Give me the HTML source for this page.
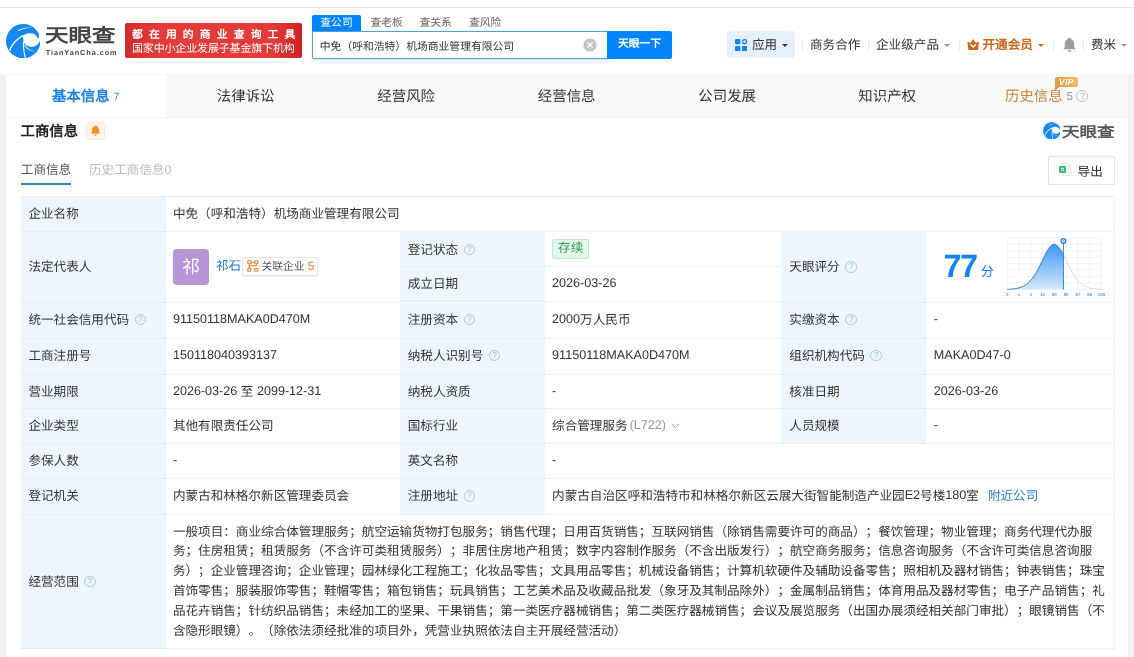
<!DOCTYPE html>
<html lang="zh-CN">
<head>
<meta charset="utf-8">
<title>天眼查</title>
<style>
*{box-sizing:border-box;margin:0;padding:0}
html,body{width:1134px;height:657px;overflow:hidden;background:#fff}
body{position:relative;will-change:transform;text-rendering:geometricPrecision;text-spacing-trim:space-all;font-family:"Liberation Sans",sans-serif;font-size:12.6px;color:#333;line-height:1}
.abs{position:absolute;white-space:nowrap}
.topline{left:0;top:7px;width:1134px;height:1px;background:#e4e4e4}
.strip{background:#f3f3f3;top:74.5px;height:583px;width:6px}
/* header */
.logo-txt{left:44.8px;top:26.1px;font-size:19px;font-weight:bold;color:#444;letter-spacing:0;line-height:22px;transform:scaleX(1.235);transform-origin:0 0}
.logo-sub{left:45.7px;top:49.3px;font-size:7.3px;font-weight:bold;color:#444;letter-spacing:.94px;line-height:8px}
.banner{left:125px;top:22.5px;width:176.5px;height:35.5px;border-radius:2px;background:linear-gradient(90deg,#d22a2a 0%,#e23b3a 18%,#e23b3a 82%,#cc2323 100%);color:#fff;font-weight:bold}
.banner .l1{left:7px;top:6.5px;font-size:10.8px;letter-spacing:6.15px;line-height:12px}
.banner .l2{left:7px;top:20.6px;font-size:11px;letter-spacing:-.16px;line-height:13px;font-weight:normal}
.stab{top:15px;height:16px;line-height:16px;font-size:10.8px;color:#666}
.stab.on{left:312px;width:49px;background:#0084ff;color:#fff;text-align:center;border-radius:2px 2px 0 0;line-height:16.8px}
.sinput{left:312px;top:31px;width:296px;height:27.5px;border:1px solid #4aa3d8;border-right:none;background:#fff;border-radius:0 0 0 2px;box-shadow:0 1px 2px rgba(0,80,140,.18)}
.sinput span{left:6.8px;top:0;line-height:30.4px;font-size:10.8px;color:#333}
.sbtn{left:607px;top:31px;width:65px;height:27.5px;background:#0084ff;color:#fff;font-size:10.8px;font-weight:bold;text-align:center;line-height:27.5px;border-radius:0 2px 2px 0}
.nav{top:31.7px;height:27px;line-height:27px;font-size:12.6px;color:#333}
.sep{top:39.5px;width:1px;height:11px;background:#ebebeb}
.caret{width:0;height:0;border-left:3px solid transparent;border-right:3px solid transparent;border-top:3.5px solid #999;top:43.5px}
/* tabs */
.tabbar{left:6px;top:75px;width:1122px;height:42.5px;background:#f9f9f9}
.hshadow{left:0;top:72px;width:1134px;height:3.5px;background:linear-gradient(180deg,rgba(0,0,0,0) 0%,rgba(0,0,0,.045) 100%)}
.tab{top:75px;height:42.5px;line-height:44px;width:160.3px;text-align:center;font-size:14.4px;color:#333}
.tab.on{background:#fff;color:#1a82e8;font-weight:bold}
.tab small{font-size:10.5px;font-weight:normal;margin-left:4px;position:relative;top:-1px}
/* section */
.h1{left:20.5px;top:123.6px;font-size:14.4px;font-weight:bold;line-height:17px;color:#222}
.subt{top:162.2px;line-height:17px;font-size:12.6px}
.uline{left:21px;top:183px;width:50px;height:2px;background:#3388ba}
.export{left:1048px;top:156px;width:67px;height:28.5px;border:1px solid #e2e2e2;border-radius:2px;background:#fff}
/* table */
.tbl{left:21px;top:196px;width:1094px;height:452.8px;border:1px solid #e7edf4;border-right-color:#edf1f6;background:#fff}
.c{position:absolute;white-space:nowrap;border-bottom:1px solid #ecf0f5;padding-left:7.4px;overflow:hidden}
.l{background:#eef6fd;border-bottom-color:#e4edf6}
.q{display:inline-block;width:11.5px;height:11.5px;border:1px solid #adc9df;border-radius:50%;color:#9dbdd8;font-size:8.5px;line-height:9.5px;text-align:center;vertical-align:2px;margin-left:5.6px;font-weight:normal}
.blue{color:#2a80c8}

.ava{display:inline-block;width:36px;height:36px;border-radius:4px;background:#b696d6;color:#fff;font-size:18px;line-height:36px;text-align:center;vertical-align:middle;margin-right:7px;position:relative;top:.1px}
.nm{vertical-align:middle}
.rel{display:inline-block;vertical-align:middle;height:19.5px;line-height:17.5px;border:1px solid #e6e6e6;border-radius:2px;padding:0 3px 0 4.6px;position:relative;top:-.1px;font-size:10.8px;color:#555;margin-left:.7px;background:#fff;box-shadow:0 1px 2px rgba(0,0,0,.06)}
.rel b{color:#e8833a;font-weight:normal;font-size:12px}
.st{display:inline-block;height:19.5px;line-height:17.5px;padding:0 5px;border:1px solid #c3ebd0;background:#e2f7ea;color:#3a9b5c;border-radius:2px;font-size:12.6px;vertical-align:middle;position:relative;top:.3px}
.score{font-size:32.4px;font-weight:bold;color:#1683f3;position:absolute;left:18px;top:17.3px;line-height:34px;letter-spacing:-1.5px}
.fen{position:absolute;left:55.3px;top:32px;font-size:13px;color:#1683f3;line-height:16px}
.gry{color:#999;margin-left:2px}
.scope{line-height:19.8px !important;padding-top:8.1px}
.n{position:relative;top:-1px}
.j{display:inline-block;white-space:nowrap;text-align:justify;text-align-last:justify;line-height:inherit;vertical-align:baseline}
</style>
</head>
<body>
<div class="abs topline"></div>
<div class="abs hshadow"></div>
<div class="abs strip" style="left:0"></div>
<div class="abs strip" style="left:1128px"></div>

<!-- logo -->
<svg width="0" height="0" style="position:absolute"><defs><g id="lg">
  <circle cx="50" cy="50" r="50" fill="#1688f2"/>
  <path d="M50.5 33 C58 27 70 25 80 28.5 C86 31 90.5 37 93 44.5 C94.6 41 95.6 36 96.3 31 L101 31 L101 50.5 L98.5 50.5 C95 58 88 65 78 66.5 C66 67.5 55 61 51 50 C49.5 44 49.5 38 50.5 33Z" fill="#fff"/>
  <path d="M9 77 C15 58 30 41 51.5 31.5 L52 35 C33 44 19 60 12.5 78.5Z" fill="#fff"/>
  <path d="M49.6 50 C48.5 68 50.5 85 55 99.6 L58.2 99 C53.5 84 52 68 53 52Z" fill="#fff"/>
  <path d="M34 18.5 C47 11.5 62 8.5 77 9.2 C63 10.4 49 13.5 36 20.4Z" fill="#fff"/>
  <path d="M53 60 C58 72 72 81 88 78.6 C74 79 62 71.5 56 60Z" fill="#fff"/>
</g></defs></svg>
<svg class="abs" style="left:6px;top:23.5px" width="34.4" height="34.4" viewBox="0 0 100 100"><use href="#lg"/></svg>
<div class="abs logo-txt"><span class="j" style="width:57.03px">天眼查</span></div>
<div class="abs logo-sub">TianYanCha.com</div>
<div class="abs banner"><div class="abs l1"><span class="j" style="width:169.48px">都在用的商业查询工具</span></div><div class="abs l2"><span class="j" style="width:162.62px">国家中小企业发展子基金旗下机构</span></div></div>

<!-- search -->
<div class="abs stab on"><span class="j" style="width:32.40px">查公司</span></div>
<div class="abs stab" style="left:370.4px"><span class="j" style="width:32.40px">查老板</span></div>
<div class="abs stab" style="left:419.5px"><span class="j" style="width:32.40px">查关系</span></div>
<div class="abs stab" style="left:469px"><span class="j" style="width:32.40px">查风险</span></div>
<div class="abs sinput"><span class="abs"><span class="j" style="width:194.35px">中免（呼和浩特）机场商业管理有限公司</span></span></div>
<svg class="abs" style="left:583px;top:37.5px" width="14" height="14" viewBox="0 0 14 14"><circle cx="7" cy="7" r="6.6" fill="#c4c4c8"/><path d="M4.6 4.6L9.4 9.4M9.4 4.6L4.6 9.4" stroke="#fff" stroke-width="1.3" stroke-linecap="round"/></svg>
<div class="abs sbtn"><span class="j" style="width:43.20px">天眼一下</span></div>

<!-- nav -->
<div class="abs" style="left:727px;top:30.6px;width:68px;height:27.9px;background:#e5f0fc;border-radius:2px"></div>
<svg class="abs" style="left:735px;top:39px" width="12.4" height="12.4" viewBox="0 0 24 24"><rect x="0" y="0" width="10.4" height="10.4" rx="2" fill="#0f86f5"/><rect x="0" y="13.4" width="10.4" height="10.4" rx="2" fill="#0f86f5"/><rect x="13.4" y="13.4" width="10.4" height="10.4" rx="2" fill="#0f86f5"/><circle cx="18.6" cy="5.2" r="4" fill="none" stroke="#0f86f5" stroke-width="2.6"/></svg>
<div class="abs nav" style="left:752px"><span class="j" style="width:25.20px">应用</span></div>
<div class="abs caret" style="left:781.5px;border-top-color:#333"></div>
<div class="abs sep" style="left:802px"></div>
<div class="abs nav" style="left:810px"><span class="j" style="width:50.38px">商务合作</span></div>
<div class="abs sep" style="left:868px"></div>
<div class="abs nav" style="left:876px"><span class="j" style="width:62.98px">企业级产品</span></div>
<div class="abs caret" style="left:944px"></div>
<div class="abs sep" style="left:959px"></div>
<svg class="abs" style="left:967px;top:38.6px" width="12.4" height="11.2" viewBox="0 0 24 22"><path d="M0.6 5.2 C2.6 5.6 5.2 7 6.8 7.4 C8.6 5.4 10.6 2.4 12 0 C13.4 2.4 15.4 5.4 17.2 7.4 C18.8 7 21.4 5.6 23.4 5.2 L21.6 19.6 C21.4 21.2 20.6 22 19 22 L5 22 C3.4 22 2.6 21.2 2.4 19.6Z" fill="#cf6a12"/><path d="M6.4 10.2L12 15.8L17.6 10.2" fill="none" stroke="#fff" stroke-width="2.8"/></svg>
<div class="abs nav" style="left:982.5px;color:#c9691c;font-weight:bold"><span class="j" style="width:50.38px">开通会员</span></div>
<div class="abs caret" style="left:1038px;border-top-color:#d0701c"></div>
<div class="abs sep" style="left:1053px"></div>
<svg class="abs" style="left:1062.5px;top:37px" width="13" height="15.5" viewBox="0 0 26 31"><path d="M13 1.5 C14.6 1.5 15.8 2.6 15.8 4 C20.4 5.4 22.4 9.4 22.4 14 L22.4 20 L25.4 24.4 L0.6 24.4 L3.6 20 L3.6 14 C3.6 9.4 5.6 5.4 10.2 4 C10.2 2.6 11.4 1.5 13 1.5Z" fill="#9a9da3"/><path d="M9.4 26.6 L16.6 26.6 C16.6 28.6 15 30 13 30 C11 30 9.4 28.6 9.4 26.6Z" fill="#9a9da3"/></svg>
<div class="abs sep" style="left:1083px"></div>
<div class="abs nav" style="left:1091px"><span class="j" style="width:25.20px">费米</span></div>
<div class="abs caret" style="left:1120.5px"></div>

<!-- tab bar -->
<div class="abs tabbar"></div>
<div class="abs tab on" style="left:6px;width:159.5px"><span class="j" style="width:57.59px">基本信息</span><small>7</small></div>
<div class="abs tab" style="left:165.5px"><span class="j" style="width:57.59px">法律诉讼</span></div>
<div class="abs tab" style="left:326px"><span class="j" style="width:57.59px">经营风险</span></div>
<div class="abs tab" style="left:486.5px"><span class="j" style="width:57.59px">经营信息</span></div>
<div class="abs tab" style="left:647px"><span class="j" style="width:57.59px">公司发展</span></div>
<div class="abs tab" style="left:807px"><span class="j" style="width:57.59px">知识产权</span></div>
<div class="abs tab" style="left:967px;color:#c8823a;text-align:left;padding-left:38px"><span class="j" style="width:57.59px">历史信息</span><small style="color:#999;font-size:11.5px;margin-left:4px">5</small></div>
<div class="abs" style="left:6px;top:116.6px;width:1122px;height:1px;background:#f2f2f2"></div>
<svg class="abs" style="left:1055px;top:86.5px" width="5" height="4" viewBox="0 0 5 4"><path d="M0 0H4.5L0 3.6Z" fill="#de9a3e"/></svg>
<div class="abs" style="left:1055px;top:76.5px;width:22.5px;height:10.5px;border-radius:2px 2px 2px 0;background:linear-gradient(90deg,#e19c3e,#f0bc68);color:#fff;font-size:8.8px;font-weight:bold;font-style:italic;text-align:center;line-height:10.5px;letter-spacing:.2px">VIP</div>
<div class="abs" style="left:1076.4px;top:90.4px;width:12px;height:12px;border:1px solid #c4c4c4;border-radius:50%;color:#b5b5b5;font-size:9px;line-height:10px;text-align:center">?</div>

<div class="abs h1"><span class="j" style="width:57.59px">工商信息</span></div>
<div class="abs" style="left:85.5px;top:121.5px;width:19px;height:18.5px;border-radius:3px;background:#fff5ea;border:1px solid #fdecd9"></div>
<svg class="abs" style="left:90.5px;top:125px" width="9" height="11" viewBox="0 0 18 22"><path d="M9 0.5C10.2 0.5 11 1.3 11 2.4C14.4 3.4 15.8 6.4 15.8 9.6V14L17.8 17H0.2L2.2 14V9.6C2.2 6.4 3.6 3.4 7 2.4C7 1.3 7.8 0.5 9 0.5Z" fill="#ff8a1f"/><path d="M6.4 18.6H11.6C11.6 20.2 10.4 21.4 9 21.4C7.6 21.4 6.4 20.2 6.4 18.6Z" fill="#ff8a1f"/></svg>
<!-- small logo -->
<svg class="abs" style="left:1042.6px;top:121.8px" width="17.6" height="17.6" viewBox="0 0 100 100"><use href="#lg"/></svg>
<div class="abs" style="left:1062.3px;top:122.7px;font-size:14.5px;font-weight:bold;color:#55595e;line-height:20px;transform:scaleX(1.21);transform-origin:0 0"><span class="j" style="width:43.51px">天眼查</span></div>
<div class="abs subt" style="left:20.8px;color:#555"><span class="j" style="width:50.38px">工商信息</span></div>
<div class="abs subt" style="left:89px;color:#bcbcbc"><span class="j" style="width:82.59px">历史工商信息0</span></div>
<div class="abs uline"></div>
<div class="abs export"><svg class="abs" style="left:10.4px;top:6.3px" width="12.5" height="13" viewBox="0 0 25 26"><path d="M6 1H18L24 7V25H6Z" fill="#f2f4f3" stroke="#d5dad7" stroke-width="1"/><path d="M18 1V7H24Z" fill="#dfe4e1"/><rect x="0" y="6" width="14" height="14" rx="1.5" fill="#3cb577"/><path d="M4 9.5L10 16.5M10 9.5L4 16.5" stroke="#fff" stroke-width="2"/></svg><span class="abs" style="left:28.6px;top:0;line-height:30px;font-size:12.6px;color:#333"><span class="j" style="width:25.20px">导出</span></span></div>
<div class="abs tbl">
<div class="c l" style="left:-1.0px;top:0.00px;width:144.5px;height:35.00px;line-height:34.00px"><span class="j" style="width:50.38px">企业名称</span></div>
<div class="c v" style="left:143.5px;top:0.00px;width:949.5px;height:35.00px;line-height:34.00px"><span class="j" style="width:226.70px">中免（呼和浩特）机场商业管理有限公司</span></div>
<div class="c l" style="left:-1.0px;top:35.00px;width:144.5px;height:70.50px;line-height:70.70px"><span class="j" style="width:62.98px">法定代表人</span></div>
<div class="c v" style="left:143.5px;top:35.00px;width:234.8px;height:70.50px;line-height:69.50px"><span class="ava"><span class="j" style="width:18.01px">祁</span></span><span class="blue nm"><span class="j" style="width:25.20px">祁石</span></span><span class="rel"><svg width="11.6" height="12" viewBox="0 0 23 24" style="vertical-align:-2px;margin-right:2.5px"><g fill="none" stroke="#e8833a" stroke-width="2.4"><rect x="1.5" y="1.5" width="6" height="6" rx="1"/><rect x="15.5" y="1.5" width="6" height="6" rx="1"/><rect x="1.5" y="16.5" width="6" height="6" rx="1"/><rect x="15.5" y="16.5" width="6" height="6" rx="1"/><path d="M7.5 4.5H15.5M4.5 7.5V16.5M18.5 7.5V11.5H4.5"/></g></svg><span class="j" style="width:43.20px">关联企业</span> <b>5</b></span></div>
<div class="c l" style="left:378.3px;top:35.00px;width:144.4px;height:34.80px;line-height:35.90px;padding-top:0.5px"><span class="j" style="width:50.38px">登记状态</span><span class="q">?</span></div>
<div class="c v" style="left:522.7px;top:35.00px;width:236.3px;height:34.80px;line-height:33.80px"><span class="st"><span class="j" style="width:25.20px">存续</span></span></div>
<div class="c l" style="left:378.3px;top:69.80px;width:144.4px;height:35.70px;line-height:34.70px"><span class="j" style="width:50.38px">成立日期</span></div>
<div class="c v" style="left:522.7px;top:69.80px;width:236.3px;height:35.70px;line-height:34.70px"><span class="n">2026-03-26</span></div>
<div class="c l" style="left:759.0px;top:35.00px;width:144.5px;height:70.50px;line-height:70.70px;padding-left:8.3px"><span class="j" style="width:50.38px">天眼评分</span><span class="q">?</span></div>
<div class="c v" style="left:903.5px;top:35.00px;width:189.5px;height:70.50px;line-height:69.50px;padding-left:8.3px"><span class="score">77</span><span class="fen"><span class="j" style="width:13.03px">分</span></span></div>
<div class="c l" style="left:-1.0px;top:105.50px;width:144.5px;height:36.20px;line-height:33.80px;padding-top:1px"><span class="j" style="width:100.76px">统一社会信用代码</span><span class="q">?</span></div>
<div class="c v" style="left:143.5px;top:105.50px;width:234.8px;height:36.20px;line-height:33.80px;padding-top:1px"><span class="n">91150118MAKA0D470M</span></div>
<div class="c l" style="left:378.3px;top:105.50px;width:144.4px;height:36.20px;line-height:33.80px;padding-top:1px"><span class="j" style="width:50.38px">注册资本</span><span class="q">?</span></div>
<div class="c v" style="left:522.7px;top:105.50px;width:236.3px;height:36.20px;line-height:33.80px;padding-top:1px"><span class="n">2000</span><span class="j" style="width:50.38px">万人民币</span></div>
<div class="c l" style="left:759.0px;top:105.50px;width:144.5px;height:36.20px;line-height:33.80px;padding-left:8.3px;padding-top:1px"><span class="j" style="width:50.38px">实缴资本</span><span class="q">?</span></div>
<div class="c v" style="left:903.5px;top:105.50px;width:189.5px;height:36.20px;line-height:33.80px;padding-left:8.3px;padding-top:1px"><span class="n">-</span></div>
<div class="c l" style="left:-1.0px;top:141.70px;width:144.5px;height:36.10px;line-height:33.80px;padding-top:1px"><span class="j" style="width:62.98px">工商注册号</span></div>
<div class="c v" style="left:143.5px;top:141.70px;width:234.8px;height:36.10px;line-height:33.80px;padding-top:1px"><span class="n">150118040393137</span></div>
<div class="c l" style="left:378.3px;top:141.70px;width:144.4px;height:36.10px;line-height:33.80px;padding-top:1px"><span class="j" style="width:75.57px">纳税人识别号</span><span class="q">?</span></div>
<div class="c v" style="left:522.7px;top:141.70px;width:236.3px;height:36.10px;line-height:33.80px;padding-top:1px"><span class="n">91150118MAKA0D470M</span></div>
<div class="c l" style="left:759.0px;top:141.70px;width:144.5px;height:36.10px;line-height:33.80px;padding-left:8.3px;padding-top:1px"><span class="j" style="width:75.57px">组织机构代码</span><span class="q">?</span></div>
<div class="c v" style="left:903.5px;top:141.70px;width:189.5px;height:36.10px;line-height:33.80px;padding-left:8.3px;padding-top:1px"><span class="n">MAKA0D47-0</span></div>
<div class="c l" style="left:-1.0px;top:177.80px;width:144.5px;height:33.90px;line-height:33.80px;padding-top:1px"><span class="j" style="width:50.38px">营业期限</span></div>
<div class="c v" style="left:143.5px;top:177.80px;width:234.8px;height:33.90px;line-height:33.80px;padding-top:1px"><span class="n">2026-03-26</span> <span class="j" style="width:12.60px">至</span> <span class="n">2099-12-31</span></div>
<div class="c l" style="left:378.3px;top:177.80px;width:144.4px;height:33.90px;line-height:33.80px;padding-top:1px"><span class="j" style="width:62.98px">纳税人资质</span></div>
<div class="c v" style="left:522.7px;top:177.80px;width:236.3px;height:33.90px;line-height:33.80px;padding-top:1px"><span class="n">-</span></div>
<div class="c l" style="left:759.0px;top:177.80px;width:144.5px;height:33.90px;line-height:33.80px;padding-left:8.3px;padding-top:1px"><span class="j" style="width:50.38px">核准日期</span></div>
<div class="c v" style="left:903.5px;top:177.80px;width:189.5px;height:33.90px;line-height:33.80px;padding-left:8.3px;padding-top:1px"><span class="n">2026-03-26</span></div>
<div class="c l" style="left:-1.0px;top:211.70px;width:144.5px;height:35.20px;line-height:33.80px;padding-top:1px"><span class="j" style="width:50.38px">企业类型</span></div>
<div class="c v" style="left:143.5px;top:211.70px;width:234.8px;height:35.20px;line-height:33.80px;padding-top:1px"><span class="j" style="width:100.76px">其他有限责任公司</span></div>
<div class="c l" style="left:378.3px;top:211.70px;width:144.4px;height:35.20px;line-height:33.80px;padding-top:1px"><span class="j" style="width:50.38px">国标行业</span></div>
<div class="c v" style="left:522.7px;top:211.70px;width:236.3px;height:35.20px;line-height:33.80px;padding-top:1px"><span class="j" style="width:75.57px">综合管理服务</span><span class="gry n">(L722)</span><svg width="9" height="6" viewBox="0 0 9 6" style="margin-left:5px;vertical-align:1px"><path d="M0.7 0.8L4.5 4.8L8.3 0.8" fill="none" stroke="#999" stroke-width="1"/></svg></div>
<div class="c l" style="left:759.0px;top:211.70px;width:144.5px;height:35.20px;line-height:33.80px;padding-left:8.3px;padding-top:1px"><span class="j" style="width:50.38px">人员规模</span></div>
<div class="c v" style="left:903.5px;top:211.70px;width:189.5px;height:35.20px;line-height:33.80px;padding-left:8.3px;padding-top:1px"><span class="n">-</span></div>
<div class="c l" style="left:-1.0px;top:246.90px;width:144.5px;height:35.35px;line-height:33.80px;padding-top:1px"><span class="j" style="width:50.38px">参保人数</span></div>
<div class="c v" style="left:143.5px;top:246.90px;width:234.8px;height:35.35px;line-height:33.80px;padding-top:1px"><span class="n">-</span></div>
<div class="c l" style="left:378.3px;top:246.90px;width:144.4px;height:35.35px;line-height:33.80px;padding-top:1px"><span class="j" style="width:50.38px">英文名称</span></div>
<div class="c v" style="left:522.7px;top:246.90px;width:570.3px;height:35.35px;line-height:33.80px;padding-top:1px"><span class="n">-</span></div>
<div class="c l" style="left:-1.0px;top:282.25px;width:144.5px;height:35.35px;line-height:33.80px;padding-top:1px"><span class="j" style="width:50.38px">登记机关</span></div>
<div class="c v" style="left:143.5px;top:282.25px;width:234.8px;height:35.35px;line-height:33.80px;padding-top:1px"><span class="j" style="width:176.32px">内蒙古和林格尔新区管理委员会</span></div>
<div class="c l" style="left:378.3px;top:282.25px;width:144.4px;height:35.35px;line-height:33.80px;padding-top:1px"><span class="j" style="width:50.38px">注册地址</span><span class="q">?</span></div>
<div class="c v" style="left:522.7px;top:282.25px;width:570.3px;height:35.35px;line-height:33.80px;padding-top:1px"><span class="j" style="width:352.63px">内蒙古自治区呼和浩特市和林格尔新区云展大街智能制造产业园</span><span class="n">E2</span><span class="j" style="width:25.20px">号楼</span><span class="n">180</span><span class="j" style="width:12.60px">室</span><span class="blue" style="margin-left:9px"><span class="j" style="width:50.38px">附近公司</span></span></div>
<div class="c l" style="left:-1.0px;top:317.60px;width:144.5px;height:134.20px;line-height:134.90px"><span class="j" style="width:50.38px">经营范围</span><span class="q">?</span></div>
<div class="c v scope" style="left:143.5px;top:317.60px;width:949.5px;height:134.20px;line-height:133.20px"><span class="j" style="width:919.35px">一般项目：商业综合体管理服务；航空运输货物打包服务；销售代理；日用百货销售；互联网销售（除销售需要许可的商品）；餐饮管理；物业管理；商务代理代办服</span><br><span class="j" style="width:919.35px">务；住房租赁；租赁服务（不含许可类租赁服务）；非居住房地产租赁；数字内容制作服务（不含出版发行）；航空商务服务；信息咨询服务（不含许可类信息咨询服</span><br><span class="j" style="width:931.95px">务）；企业管理咨询；企业管理；园林绿化工程施工；化妆品零售；文具用品零售；机械设备销售；计算机软硬件及辅助设备零售；照相机及器材销售；钟表销售；珠宝</span><br><span class="j" style="width:931.95px">首饰零售；服装服饰零售；鞋帽零售；箱包销售；玩具销售；工艺美术品及收藏品批发（象牙及其制品除外）；金属制品销售；体育用品及器材零售；电子产品销售；礼</span><br><span class="j" style="width:931.95px">品花卉销售；针纺织品销售；未经加工的坚果、干果销售；第一类医疗器械销售；第二类医疗器械销售；会议及展览服务（出国办展须经相关部门审批）；眼镜销售（不</span><br><span class="j" style="width:453.38px">含隐形眼镜）。（除依法须经批准的项目外，凭营业执照依法自主开展经营活动）</span></div>
</div>
<svg class="abs" style="left:0;top:0;pointer-events:none" width="1134" height="657" viewBox="0 0 1134 657">
<defs><linearGradient id="cg" x1="0" y1="0" x2="0" y2="1"><stop offset="0" stop-color="#3d97f3"/><stop offset="1" stop-color="#d6e9fc"/></linearGradient></defs>
<path d="M1007.2 237.8V289.6M1019.0 237.8V289.6M1030.8 237.8V289.6M1042.6 237.8V289.6M1054.3 237.8V289.6M1066.1 237.8V289.6M1077.9 237.8V289.6M1089.7 237.8V289.6M1101.5 237.8V289.6M1007.2 237.8H1101.5M1007.2 244.3H1101.5M1007.2 250.8H1101.5M1007.2 257.2H1101.5M1007.2 263.7H1101.5M1007.2 270.2H1101.5M1007.2 276.7H1101.5M1007.2 283.1H1101.5M1007.2 289.6H1101.5" stroke="#ebeff6" stroke-width="0.7" fill="none"/>
<path d="M1007.2 289.3 L1008.7 289.3 L1010.2 289.2 L1011.7 289.1 L1013.2 288.9 L1014.7 288.7 L1016.2 288.5 L1017.7 288.2 L1019.2 287.8 L1020.7 287.3 L1022.2 286.7 L1023.7 286.0 L1025.2 285.1 L1026.7 284.1 L1028.2 282.9 L1029.7 281.4 L1031.2 279.8 L1032.7 277.9 L1034.2 275.7 L1035.7 273.4 L1037.2 270.7 L1038.7 267.9 L1040.2 265.0 L1041.7 261.9 L1043.2 258.8 L1044.7 255.7 L1046.2 252.8 L1047.7 250.2 L1049.2 247.9 L1050.7 246.1 L1052.2 244.9 L1053.7 244.3 L1055.2 244.5 L1056.7 245.2 L1058.2 246.6 L1059.7 248.6 L1061.2 251.0 L1062.7 253.7 L1063.4 255.1 L1063.4 289.6 L1007.2 289.6Z" fill="url(#cg)"/>
<path d="M1007.2 289.3 L1008.7 289.3 L1010.2 289.2 L1011.7 289.1 L1013.2 288.9 L1014.7 288.7 L1016.2 288.5 L1017.7 288.2 L1019.2 287.8 L1020.7 287.3 L1022.2 286.7 L1023.7 286.0 L1025.2 285.1 L1026.7 284.1 L1028.2 282.9 L1029.7 281.4 L1031.2 279.8 L1032.7 277.9 L1034.2 275.7 L1035.7 273.4 L1037.2 270.7 L1038.7 267.9 L1040.2 265.0 L1041.7 261.9 L1043.2 258.8 L1044.7 255.7 L1046.2 252.8 L1047.7 250.2 L1049.2 247.9 L1050.7 246.1 L1052.2 244.9 L1053.7 244.3 L1055.2 244.5 L1056.7 245.2 L1058.2 246.6 L1059.7 248.6 L1061.2 251.0 L1062.7 253.7 L1063.4 255.1" fill="none" stroke="#2a82d8" stroke-width="1"/>
<path d="M1063.4 255.1 L1064.9 258.2 L1066.4 261.3 L1067.9 264.4 L1069.4 267.4 L1070.9 270.2 L1072.4 272.9 L1073.9 275.3 L1075.4 277.5 L1076.9 279.4 L1078.4 281.1 L1079.9 282.6 L1081.4 283.9 L1082.9 285.0 L1084.4 285.9 L1085.9 286.6 L1087.4 287.2 L1088.9 287.7 L1090.4 288.1 L1091.9 288.4 L1093.4 288.7 L1094.9 288.9 L1096.4 289.0 L1097.9 289.2 L1099.4 289.3 L1100.9 289.3 L1101.5 289.4" fill="none" stroke="#d0d4d8" stroke-width="0.8"/>
<path d="M1063.4 243.5V289.6" stroke="#2a82d8" stroke-width="1"/>
<circle cx="1063.4" cy="240.9" r="2.3" fill="#fff" stroke="#2a82d8" stroke-width="1.4"/>
<circle cx="1063.4" cy="240.9" r="0.7" fill="#2a82d8"/>
<g font-family="'Liberation Sans',sans-serif" font-size="4.4" font-weight="bold" fill="#5a9fe6"><text x="1007.2" y="295.6" text-anchor="middle">0</text><text x="1019.0" y="295.6" text-anchor="middle">1</text><text x="1030.8" y="295.6" text-anchor="middle">3</text><text x="1042.6" y="295.6" text-anchor="middle">15</text><text x="1054.3" y="295.6" text-anchor="middle">50</text><text x="1066.1" y="295.6" text-anchor="middle">85</text><text x="1077.9" y="295.6" text-anchor="middle">97</text><text x="1089.7" y="295.6" text-anchor="middle">99</text><text x="1101.5" y="295.6" text-anchor="middle">100</text></g>
</svg>
</body>
</html>
